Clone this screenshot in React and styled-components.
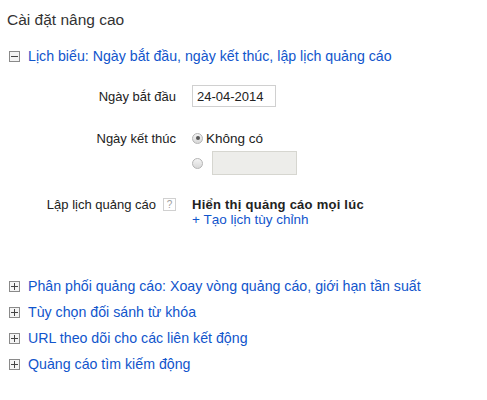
import React from 'react';
import styled, { createGlobalStyle } from 'styled-components';

const GlobalStyle = createGlobalStyle`
  body {
    margin: 0;
    background: #fff;
    font-family: "Liberation Sans", Arial, sans-serif;
    font-size: 13px;
    color: #222;
  }
`;

const Page = styled.div`
  width: 487px;
  height: 400px;
  padding: 11px 0 0 7px;
  box-sizing: border-box;
`;

const Title = styled.div`
  font-size: 15.5px;
  line-height: 18px;
  color: #333;
`;

const Section = styled.div`
  display: flex;
  align-items: center;
  gap: 8px;
  margin-top: ${p => p.$top || 0}px;
  height: 26px;
  padding-left: 2px;
`;

const Toggle = styled.span`
  position: relative;
  width: 9px;
  height: 9px;
  border: 1px solid #8a8a8a;
  background: #f4f4f4;
  flex-shrink: 0;

  &::before {
    content: '';
    position: absolute;
    left: 1px;
    right: 1px;
    top: 4px;
    height: 1px;
    background: #444;
  }

  &::after {
    content: '';
    display: ${p => (p.$open ? 'none' : 'block')};
    position: absolute;
    top: 1px;
    bottom: 1px;
    left: 4px;
    width: 1px;
    background: #444;
  }
`;

const Link = styled.a`
  color: #15c;
  font-size: 14.2px;
  text-decoration: none;
  cursor: pointer;
`;

const Form = styled.div`
  display: grid;
  grid-template-columns: 169px auto;
  column-gap: 16px;
  margin-top: 16px;
`;

const Label = styled.div`
  display: flex;
  justify-content: flex-end;
  align-items: center;
  gap: 7px;
  color: #222;
  height: ${p => p.$h}px;
`;

const Field = styled.div`
  display: flex;
  flex-direction: column;
  align-items: flex-start;
  padding-bottom: ${p => p.$pb || 0}px;
`;

const DateInput = styled.input`
  width: 84px;
  height: 22px;
  box-sizing: border-box;
  border: 1px solid #d0d0d0;
  padding: 0 4px;
  font: inherit;
  color: #222;
  outline: none;
`;

const RadioRow = styled.label`
  display: flex;
  align-items: center;
  gap: 3px;
  height: ${p => p.$h || 16}px;
  margin-top: ${p => p.$top || 0}px;
  font-size: 13.5px;
`;

const Radio = styled.span`
  position: relative;
  width: 9px;
  height: 9px;
  border-radius: 50%;
  border: 1px solid #b4b4b4;
  background: linear-gradient(#f4f4f4, #d8d8d8);
  flex-shrink: 0;

  &::after {
    content: '';
    display: ${p => (p.$checked ? 'block' : 'none')};
    position: absolute;
    left: 2.5px;
    top: 2.5px;
    width: 4px;
    height: 4px;
    border-radius: 50%;
    background: #555;
  }
`;

const DisabledInput = styled.div`
  width: 85px;
  height: 24px;
  box-sizing: border-box;
  border: 1px solid #d6d6d0;
  background: #ededea;
  margin-left: 6px;
`;

const Help = styled.span`
  width: 11px;
  height: 11px;
  border: 1px solid #d0d0d0;
  color: #a0a0a0;
  font-size: 10px;
  line-height: 11px;
  text-align: center;
`;

const Strong = styled.div`
  font-weight: bold;
  line-height: 15px;
  letter-spacing: 0.25px;
`;

const SubLink = styled(Link)`
  line-height: 15px;
  font-size: 13.5px;
`;

export default function App() {
  return (
    <Page>
      <GlobalStyle />
      <Title>Cài đặt nâng cao</Title>

      <Section $top={14}>
        <Toggle $open />
        <Link>Lịch biểu: Ngày bắt đầu, ngày kết thúc, lập lịch quảng cáo</Link>
      </Section>

      <Form>
        <Label $h={22}>Ngày bắt đầu</Label>
        <Field $pb={23}>
          <DateInput defaultValue="24-04-2014" />
        </Field>

        <Label $h={16}>Ngày kết thúc</Label>
        <Field $pb={22}>
          <RadioRow>
            <Radio $checked />
            Không có
          </RadioRow>
          <RadioRow $h={24} $top={5}>
            <Radio />
            <DisabledInput />
          </RadioRow>
        </Field>

        <Label $h={15}>
          Lập lịch quảng cáo
          <Help>?</Help>
        </Label>
        <Field>
          <Strong>Hiển thị quảng cáo mọi lúc</Strong>
          <SubLink>+ Tạo lịch tùy chỉnh</SubLink>
        </Field>
      </Form>

      <Section $top={46}>
        <Toggle />
        <Link>Phân phối quảng cáo: Xoay vòng quảng cáo, giới hạn tần suất</Link>
      </Section>
      <Section>
        <Toggle />
        <Link>Tùy chọn đối sánh từ khóa</Link>
      </Section>
      <Section>
        <Toggle />
        <Link>URL theo dõi cho các liên kết động</Link>
      </Section>
      <Section>
        <Toggle />
        <Link>Quảng cáo tìm kiếm động</Link>
      </Section>
    </Page>
  );
}
